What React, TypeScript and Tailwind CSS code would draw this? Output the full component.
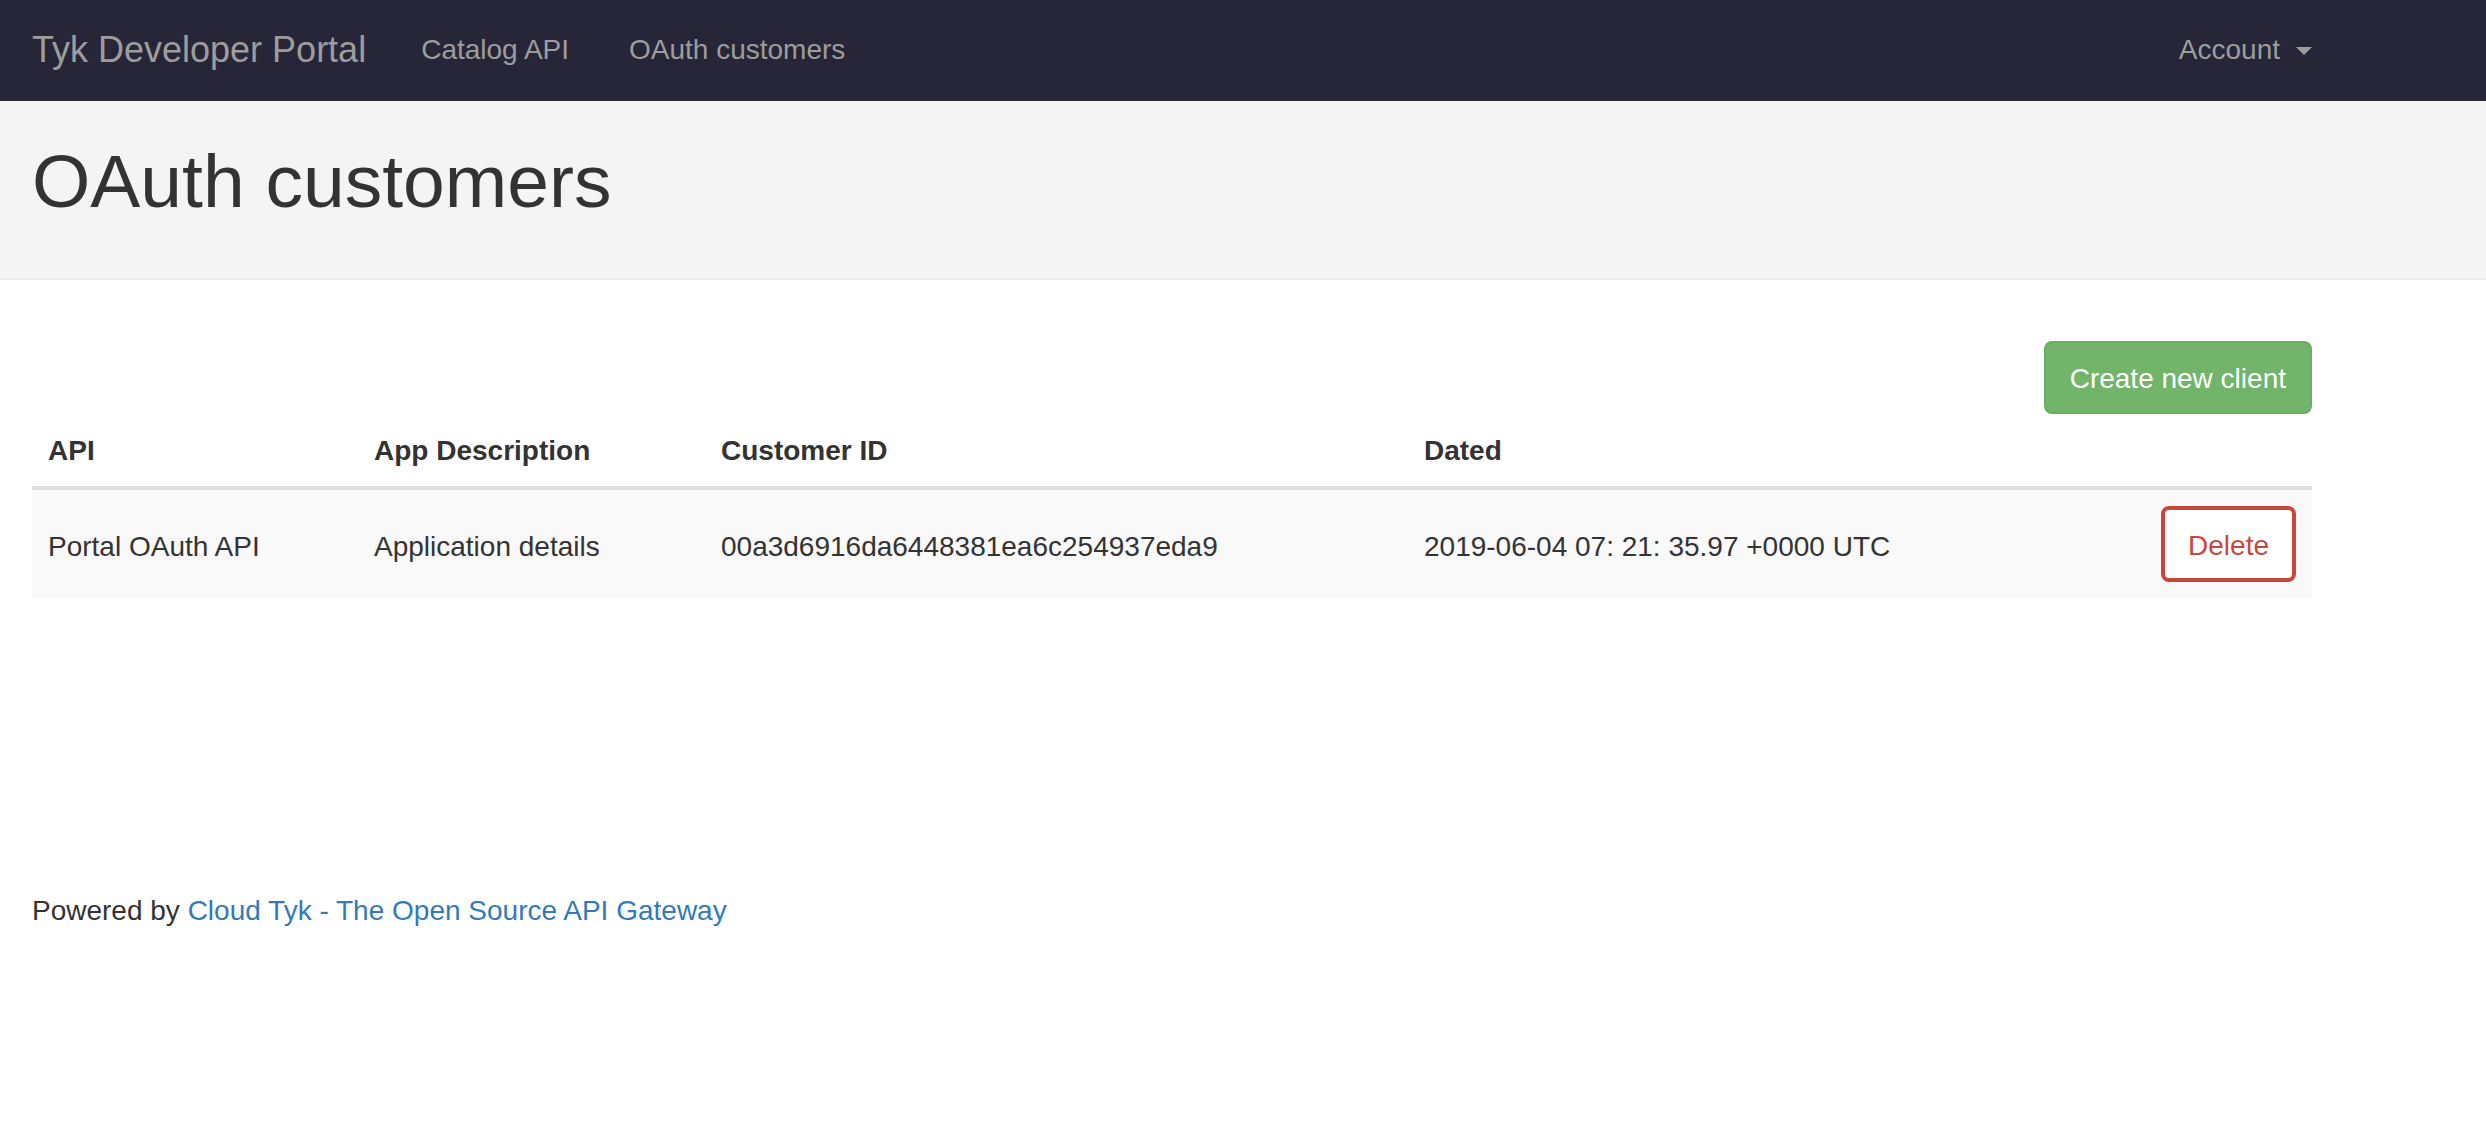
const rows = [
  {
    api: 'Portal OAuth API',
    description: 'Application details',
    customerId: '00a3d6916da6448381ea6c254937eda9',
    dated: '2019-06-04 07: 21: 35.97 +0000 UTC',
  },
];

function Navbar() {
  return (
    <nav className="h-[101px] border-b-2 border-[#2b2b2b] bg-[#262638]">
      <div className="flex h-full w-[2344px] items-center px-[32px] text-[#9d9d9d]">
        <a className="pr-[25px] text-[36px] leading-[40px]">Tyk Developer Portal</a>
        <a className="px-[30px] text-[28px] leading-[40px]">Catalog API</a>
        <a className="px-[30px] text-[28px] leading-[40px]">OAuth customers</a>
        <a className="ml-auto flex items-center gap-[16px] text-[28px] leading-[40px]">
          Account
          <span className="mt-[3px] h-0 w-0 border-x-[8px] border-t-[8px] border-x-transparent border-t-[#9d9d9d]" />
        </a>
      </div>
    </nav>
  );
}

export default function App() {
  return (
    <div className="min-h-screen bg-white font-['Liberation_Sans',Arial,sans-serif] text-[#333333]">
      <Navbar />
      <header className="h-[179px] border-b-2 border-[#eaeaea] bg-[#f4f4f4]">
        <div className="w-[2344px] px-[32px] pt-[39px]">
          <h1 className="text-[75px] leading-[82px]">OAuth customers</h1>
        </div>
      </header>
      <main className="w-[2344px] px-[32px]">
        <div className="mt-[61px] flex justify-end">
          <button className="h-[73px] rounded-[8px] border-2 border-[#69ad60] bg-[#72b46a] px-[24px] pt-[2px] text-[28px] leading-[40px] text-white">
            Create new client
          </button>
        </div>
        <table className="w-full border-collapse text-left text-[28px] leading-[40px]">
          <colgroup>
            <col className="w-[326px]" />
            <col className="w-[347px]" />
            <col className="w-[703px]" />
            <col className="w-[620px]" />
            <col />
          </colgroup>
          <thead>
            <tr className="border-b-4 border-[#dddddd]">
              <th className="px-[16px] pt-[17px] pb-[15px] font-bold">API</th>
              <th className="px-[16px] pt-[17px] pb-[15px] font-bold">App Description</th>
              <th className="px-[16px] pt-[17px] pb-[15px] font-bold">Customer ID</th>
              <th className="px-[16px] pt-[17px] pb-[15px] font-bold">Dated</th>
              <th className="p-[16px]" />
            </tr>
          </thead>
          <tbody>
            {rows.map((row) => (
              <tr key={row.customerId} className="bg-[#f9f9f9]">
                <td className="px-[16px] pt-[21px] pb-[15px] align-middle">{row.api}</td>
                <td className="px-[16px] pt-[21px] pb-[15px] align-middle">{row.description}</td>
                <td className="px-[16px] pt-[21px] pb-[15px] align-middle">{row.customerId}</td>
                <td className="px-[16px] pt-[21px] pb-[15px] align-middle">{row.dated}</td>
                <td className="p-[16px] text-right align-middle">
                  <button className="h-[76px] rounded-[8px] border-4 border-[#c9463d] bg-white px-[23px] pt-[3px] text-[28px] leading-[40px] text-[#c9463d]">
                    Delete
                  </button>
                </td>
              </tr>
            ))}
          </tbody>
        </table>
        <footer className="mt-[293px] text-[28px] leading-[40px]">
          Powered by <a className="text-[#337ab7]">Cloud Tyk - The Open Source API Gateway</a>
        </footer>
      </main>
    </div>
  );
}
